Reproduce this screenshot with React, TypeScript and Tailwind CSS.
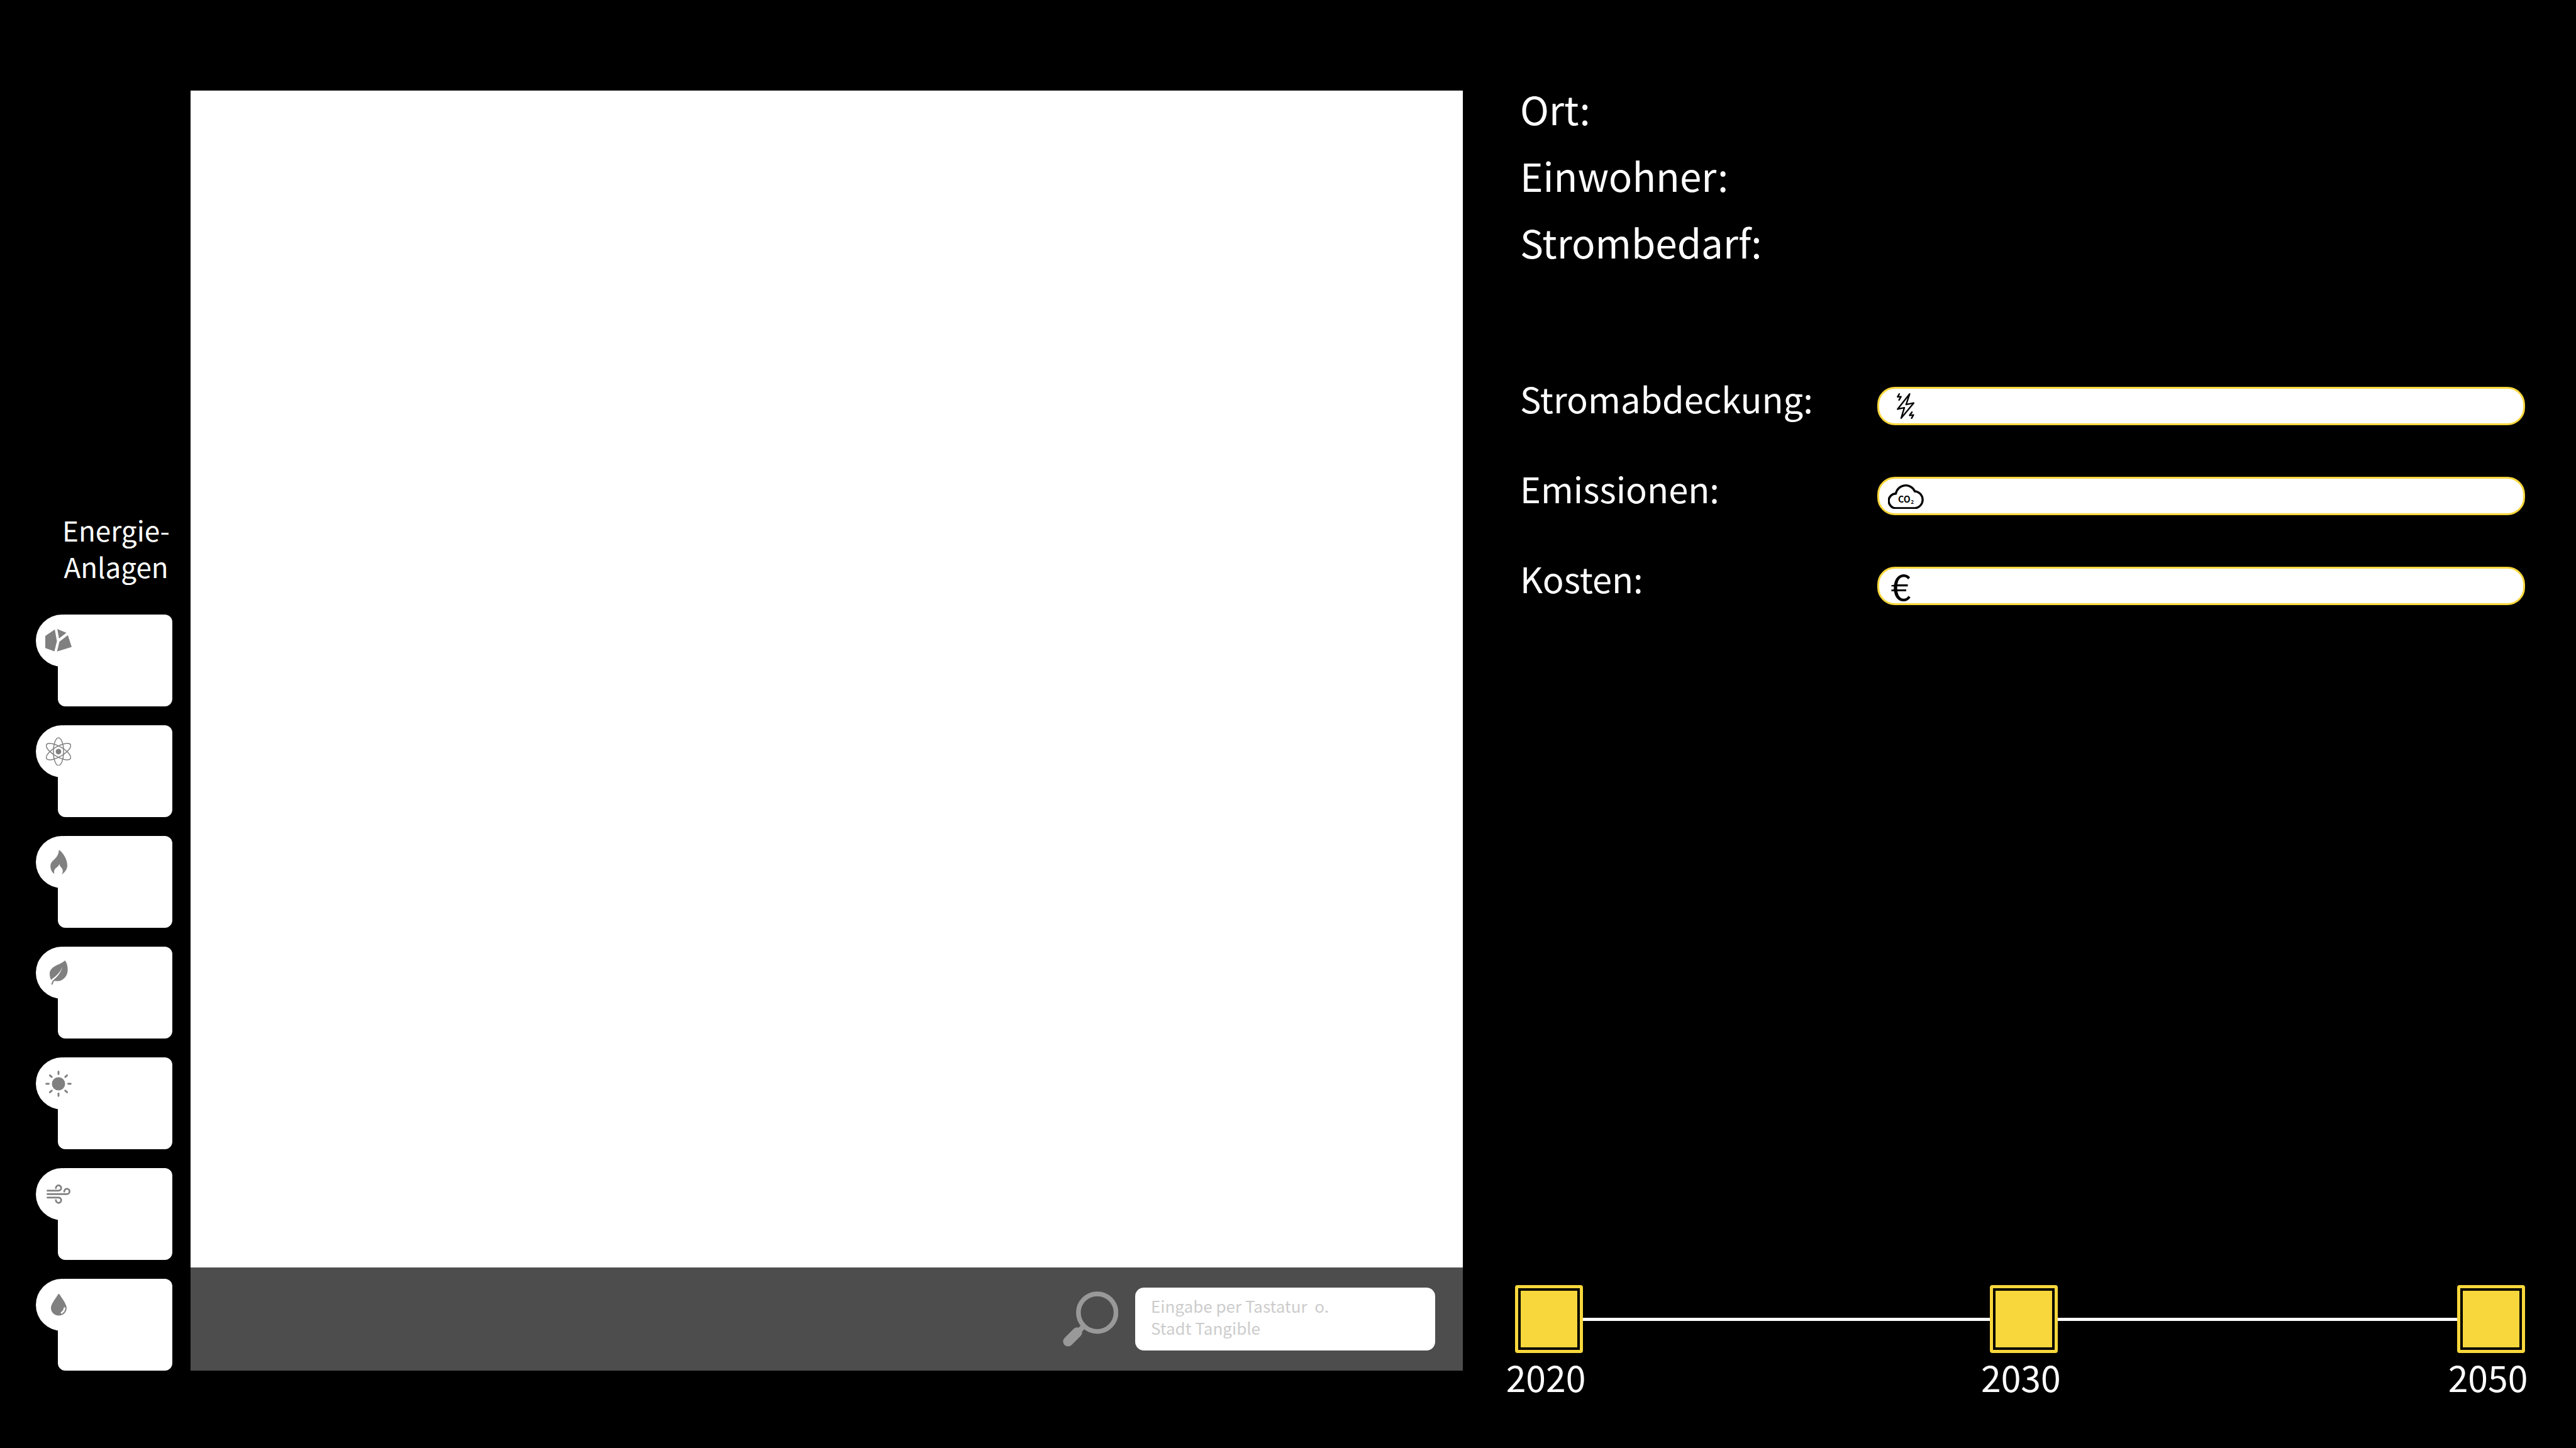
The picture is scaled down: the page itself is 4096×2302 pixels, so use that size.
import type { ReactNode } from "react";

function CoalIcon() {
  return (
    <svg viewBox="0 0 50 43" className="w-[42px] fill-[#808080]" aria-hidden="true">
      <path d="M0 13 18 1 22 23 17.3 42.3 0 36Z" />
      <path d="M22.7 0 40 7 26 18Z" />
      <path d="M42.7 11.5 50 34 22.3 42.7 26.7 24.1Z" />
    </svg>
  );
}

function AtomIcon() {
  return (
    <svg viewBox="0 0 48 55" className="w-[40px] fill-none stroke-[#808080]" strokeWidth="1.8" aria-hidden="true">
      <ellipse cx="24" cy="27.5" rx="9.7" ry="26.4" />
      <ellipse cx="24" cy="27.5" rx="9.7" ry="26.4" transform="rotate(60 24 27.5)" />
      <ellipse cx="24" cy="27.5" rx="9.7" ry="26.4" transform="rotate(-60 24 27.5)" />
      <circle cx="24" cy="27.5" r="5.3" fill="#808080" stroke="none" />
    </svg>
  );
}

function FlameIcon() {
  return (
    <svg viewBox="0 0 32 47" className="w-[27px] fill-[#808080]" aria-hidden="true">
      <path d="M16.3 0C24 5 32 18 32 29.4 32 37 27 43 21.7 46.5 23.5 43 24 40 23 37 21.5 33 17.5 32 17 26.5 16 32 10 34 8 37.5 6.8 40 7 43 7.5 45.3 3 42 .3 37 .3 31 .3 18 15 19 16.3 0Z" />
    </svg>
  );
}

function LeafIcon() {
  return (
    <svg viewBox="0 0 35 47" className="w-[29px] fill-[#808080]" aria-hidden="true">
      <path d="M29.3 0C33 4 34.6 11 34.6 18 34.6 30 25 40 14 39.5 11 39.3 9 39 8.3 39.5 7 41 6.5 44 5.3 46.5L3 46C4 42 5 39.5 7.5 37 14 32 20 26 24.7 12.2 20 22 14 29 7 33.5 5 34.8 4 36.5 3 37.5 1 34 0 30 0 26 0 10 20 9 29.3 0Z" />
    </svg>
  );
}

function SunIcon() {
  return (
    <svg viewBox="0 0 50 50" className="w-[42px] stroke-[#808080]" strokeWidth="3.5" strokeLinecap="round" aria-hidden="true">
      <circle cx="25" cy="25" r="12.5" fill="#808080" stroke="none" />
      <path d="M25 2V6.5M25 43.5V48M2 25H6.5M43.5 25H48M8.8 9 12.2 12M37.8 38 41.2 41M41.2 9 37.8 12M12.2 38 8.8 41" />
    </svg>
  );
}

function WindIcon() {
  return (
    <svg viewBox="0 0 45 36" className="w-[38px] fill-none stroke-[#808080]" strokeWidth="3.2" strokeLinecap="round" aria-hidden="true">
      <path d="M1.7 11.7H22.3A5 5 0 1 0 17.6 7" />
      <path d="M1.7 18.2H38.3A5 5 0 1 0 33.4 13.6" />
      <path d="M1.7 24.7H22.3A5 5 0 1 1 17.6 29.4" />
    </svg>
  );
}

function DropIcon() {
  return (
    <svg viewBox="0 0 30.4 42" className="w-[25px] fill-[#808080]" aria-hidden="true">
      <path d="M15.2 0C16 0 16.5.8 17 1.6 23 11 30.3 20 30.3 27.5 30.3 35.5 23.5 42 15.2 42S0 35.5 0 27.5C0 20 7.5 11 13.4 1.6 13.9.8 14.4 0 15.2 0Z" />
      <path d="M26.3 27.3C26 31.5 23.8 34.7 20.5 36.6" fill="none" stroke="#fff" strokeWidth="3.2" strokeLinecap="round" />
    </svg>
  );
}

function SearchIcon() {
  return (
    <svg viewBox="0 0 106 106" className="w-[88px] shrink-0 fill-none stroke-[#999999]" aria-hidden="true">
      <circle cx="65.8" cy="40.7" r="36" strokeWidth="9" />
      <path d="M41 65 32 75" strokeWidth="10" />
      <path d="M27.5 78.5 10 96" strokeWidth="19" strokeLinecap="round" />
    </svg>
  );
}

function BoltIcon() {
  return (
    <svg viewBox="0 0 33.3 48.7" className="ml-[28px] w-[28px] fill-none stroke-black" strokeWidth="2.8" strokeLinejoin="round" strokeLinecap="round" aria-hidden="true">
      <path d="M24.3 1.5 17.7 21.5 32 18.7 8.3 47.3 14.3 27.5 1.5 30.3Z" />
      <path d="M4.7 1.5 1.5 7 8 6.7 4.3 13" />
      <path d="M28.7 36 24.3 42 31.5 41.3 28 47.5" />
    </svg>
  );
}

function CloudIcon() {
  return (
    <svg viewBox="0 0 69.4 50" className="ml-[14px] w-[58px]" role="img" aria-label="CO2">
      <path
        d="M15.5 47.8A13.9 13.9 0 0 1 15 20A19 19 0 0 1 51 15.6A16.2 16.2 0 0 1 52 47.8Z"
        className="fill-none stroke-black"
        strokeWidth="4"
      />
      <text x="19" y="37.3" fontSize="17" fontWeight="700">
        CO
      </text>
      <text x="43.5" y="40" fontSize="10" fontWeight="700">
        2
      </text>
    </svg>
  );
}

const plants: { name: string; icon: ReactNode }[] = [
  { name: "Kohle", icon: <CoalIcon /> },
  { name: "Atomkraft", icon: <AtomIcon /> },
  { name: "Gas", icon: <FlameIcon /> },
  { name: "Biomasse", icon: <LeafIcon /> },
  { name: "Sonne", icon: <SunIcon /> },
  { name: "Wind", icon: <WindIcon /> },
  { name: "Wasser", icon: <DropIcon /> },
];

const stats: { label: string; icon: ReactNode }[] = [
  { label: "Stromabdeckung:", icon: <BoltIcon /> },
  { label: "Emissionen:", icon: <CloudIcon /> },
  {
    label: "Kosten:",
    icon: (
      <span className="ml-[18px] pb-1 text-[58px] leading-[52px] text-black" aria-hidden="true">
        €
      </span>
    ),
  },
];

function PlantCard({ name, icon }: { name: string; icon: ReactNode }) {
  return (
    <li className="flex">
      <button type="button" aria-label={name} className="relative ml-[35px] h-[146px] flex-1 rounded-[12px] bg-white">
        <span className="absolute top-0 -left-[35px] flex size-[83px] items-center justify-center rounded-full bg-white pr-[11px]">
          {icon}
        </span>
      </button>
    </li>
  );
}

function YearButton({ id }: { id: string }) {
  return (
    <button
      type="button"
      aria-labelledby={id}
      className="flex size-[108px] rounded-[4px] border-[5px] border-[#f8d73c] p-[4px]"
    >
      <span className="size-full bg-[#f8d73c]" />
    </button>
  );
}

export default function App() {
  return (
    <main className="flex min-h-screen bg-black pt-[144px] pr-[81px] pb-[84px] pl-[57px] font-['Noto_Sans_CJK_SC','Noto_Sans',sans-serif] text-white">
      <aside className="mb-[39px] flex w-[217px] shrink-0 flex-col justify-end">
        <h2 className="mb-12 ml-[38px] text-center text-[44px] leading-[58px]">
          Energie-
          <br />
          Anlagen
        </h2>
        <ul className="flex flex-col gap-[30px]">
          {plants.map((p) => (
            <PlantCard key={p.name} name={p.name} icon={p.icon} />
          ))}
        </ul>
      </aside>

      <section aria-label="Karte" className="mb-[39px] ml-[29px] flex flex-[2023] flex-col">
        <div className="flex-1 bg-white" />
        <div className="flex h-[164px] items-center justify-end gap-[27px] bg-[#4d4d4d] pr-[44px]">
          <SearchIcon />
          <textarea
            aria-label="Ort suchen"
            rows={2}
            placeholder={"Eingabe per Tastatur  o.\nStadt Tangible"}
            className="block h-[100px] w-[477px] resize-none overflow-hidden rounded-[14px] bg-white px-[25px] pt-[11px] text-[26px] leading-[35px] text-black placeholder:text-[#cccccc]"
          />
        </div>
      </section>

      <section aria-label="Übersicht" className="ml-[83px] flex flex-[1606] flex-col">
        <div className="flex flex-col gap-[50px] pl-[8px] text-[62px] leading-[56px]">
          <p>Ort:</p>
          <p>Einwohner:</p>
          <p>Strombedarf:</p>
        </div>

        <div className="mt-[203px] flex flex-col gap-[82px] pl-[8px]">
          {stats.map((s) => (
            <div key={s.label} className="flex items-start">
              <p className="w-[568px] shrink-0 text-[56px] leading-[36px]">{s.label}</p>
              <div className="flex h-[61px] flex-1 items-center rounded-[28px] border-[3px] border-[#f8d73c] bg-white">
                {s.icon}
              </div>
            </div>
          ))}
        </div>

        <div className="mt-auto grid grid-cols-[108px_51fr_108px_50fr_108px] items-center gap-y-[7px]">
          <YearButton id="year-2020" />
          <span className="h-[5px] bg-white" />
          <YearButton id="year-2030" />
          <span className="h-[5px] bg-white" />
          <YearButton id="year-2050" />
          <span id="year-2020" className="col-start-1 mr-[10px] justify-self-center text-[57px] leading-[60px]">
            2020
          </span>
          <span id="year-2030" className="col-start-3 mr-[10px] justify-self-center text-[57px] leading-[60px]">
            2030
          </span>
          <span id="year-2050" className="col-start-5 mr-[10px] justify-self-center text-[57px] leading-[60px]">
            2050
          </span>
        </div>
      </section>
    </main>
  );
}
